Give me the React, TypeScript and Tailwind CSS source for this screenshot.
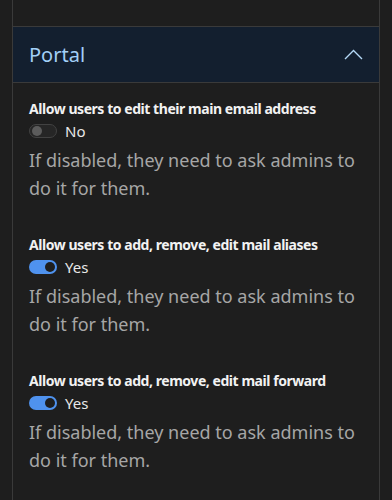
import React from "react";

function Toggle({ on }: { on: boolean }) {
  return on ? (
    <div className="w-[28px] h-[14px] rounded-full bg-[#4f92ee] flex items-center justify-end pr-[2px]">
      <div className="w-[10px] h-[10px] rounded-full bg-[#1e1e1e]" />
    </div>
  ) : (
    <div className="w-[28px] h-[14px] rounded-full bg-[#262626] border border-[#424242] flex items-center pl-[2px]">
      <div className="w-[10px] h-[10px] rounded-full bg-[#5c5c5c]" />
    </div>
  );
}

function Setting({ title, on }: { title: string; on: boolean }) {
  return (
    <div className="flex flex-col">
      <div className="text-[14px] leading-[20px] font-bold tracking-[-0.45px] text-[#f2f2f2]">{title}</div>
      <div className="flex items-center gap-2 h-[20px] mt-[2px]">
        <Toggle on={on} />
        <span className="text-[15px] leading-[20px] text-[#e8e8e8]">{on ? "Yes" : "No"}</span>
      </div>
      <div className="mt-[5px] text-[18px] leading-[28px] text-[#a6a6a6]">
        If disabled, they need to ask admins to do it for them.
      </div>
    </div>
  );
}

export default function App() {
  return (
    <div className="min-h-[500px] bg-[#1e1e1e] px-3" style={{ fontFamily: '"Noto Sans", sans-serif' }}>
      <div className="min-h-[500px] border-x border-[#3a3a3a] flex flex-col">
        <div className="h-[26px]" />
        <div className="h-[57px] border-y border-[#3a3a3a] bg-[#131f2f] flex items-center justify-between pl-4 pr-[16px]">
          <span className="text-[20px] text-[#a3d0f7]">Portal</span>
          <svg width="19" height="11" viewBox="0 0 19 11" fill="none">
            <path d="M1 10 L9.5 1.5 L18 10" stroke="#b5d9f7" strokeWidth="1.4" />
          </svg>
        </div>
        <div className="flex flex-col gap-[33px] px-4 pt-4">
          <Setting title="Allow users to edit their main email address" on={false} />
          <Setting title="Allow users to add, remove, edit mail aliases" on={true} />
          <Setting title="Allow users to add, remove, edit mail forward" on={true} />
        </div>
      </div>
    </div>
  );
}
